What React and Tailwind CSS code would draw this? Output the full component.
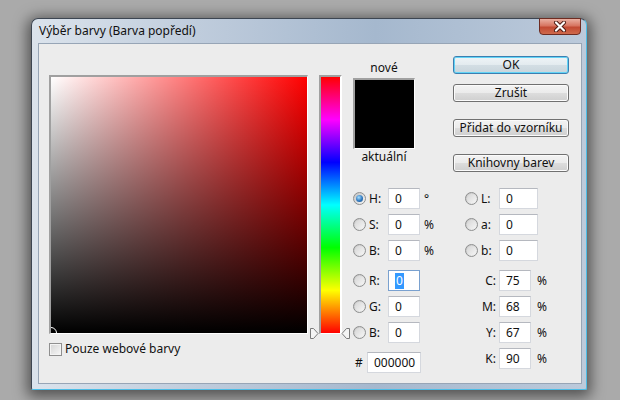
// Photoshop colour picker dialog (Vista Aero frame), Czech UI.

function Radio({ checked }) {
  return (
    <span className="flex h-[13px] w-[13px] shrink-0 items-center justify-center rounded-full border border-[#8e8f8f] bg-[linear-gradient(135deg,#c2c2c2,#f7f7f7)]">
      {checked ? (
        <span className="h-[7px] w-[7px] rounded-full bg-[radial-gradient(circle_at_40%_35%,#a6e0ff,#2f78c0_55%,#1b4f86)]" />
      ) : (
        <span className="h-[9px] w-[9px] rounded-full bg-[linear-gradient(135deg,#d6d6d6,#f5f5f5)]" />
      )}
    </span>
  );
}

function Box({ value, width, focused }) {
  return (
    <div
      className={`flex h-[21px] shrink-0 items-center bg-white pl-[6px] ${width} ${
        focused
          ? 'border border-[#7aa1cf]'
          : 'border border-[#d5d8de] border-t-[#b5b8bf]'
      }`}
    >
      {focused ? (
        <span className="bg-[#3399ff] px-[1px] leading-[16px] text-white">{value}</span>
      ) : (
        value
      )}
    </div>
  );
}

function Button({ children, primary, className = '' }) {
  return (
    <div
      className={`flex h-[18px] items-center justify-center rounded-[3px] border ${
        primary
          ? 'border-[#3c7fb1] bg-[linear-gradient(#eef4f7_0%,#e3ebef_50%,#d3dee4_50%,#c8d5dc_100%)] shadow-[inset_0_0_0_1px_#63d4f6]'
          : 'border-[#707070] bg-[linear-gradient(#f3f3f3_0%,#ebebeb_50%,#dddddd_50%,#cfcfcf_100%)] shadow-[inset_0_0_0_1px_#fbfbfb]'
      } ${className}`}
    >
      {children}
    </div>
  );
}

function Marker({ flip }) {
  return (
    <svg width="9" height="11" viewBox="0 0 9 11" className={flip ? '-scale-x-100' : ''}>
      <polygon points="0.5,0.5 3.5,0.5 8,5.5 3.5,10.5 0.5,10.5" fill="#f4f4f4" stroke="#7a7a7a" />
    </svg>
  );
}

const LEFT_ROWS = [
  { label: 'H:', value: '0', unit: '°', checked: true, mt: '' },
  { label: 'S:', value: '0', unit: '%', mt: 'mt-[5px]' },
  { label: 'B:', value: '0', unit: '%', mt: 'mt-[5px]' },
  { label: 'R:', value: '0', focused: true, mt: 'mt-[9px]' },
  { label: 'G:', value: '0', mt: 'mt-[5px]' },
  { label: 'B:', value: '0', mt: 'mt-[5px]' },
];

const LAB_ROWS = [
  { label: 'L:', value: '0', mt: '' },
  { label: 'a:', value: '0', mt: 'mt-[5px]' },
  { label: 'b:', value: '0', mt: 'mt-[5px]' },
];

const CMYK_ROWS = [
  { label: 'C:', value: '75', mt: 'mt-[9px]' },
  { label: 'M:', value: '68', mt: 'mt-[5px]' },
  { label: 'Y:', value: '67', mt: 'mt-[5px]' },
  { label: 'K:', value: '90', mt: 'mt-[5px]' },
];

export default function App() {
  return (
    <div className="h-[400px] w-[620px] overflow-hidden bg-[#aaaaaa] pl-[31px] pt-[18px] font-['Noto_Sans',sans-serif] text-[12px] text-[#111]">
      <div className="flex h-[372px] w-[556px] flex-col rounded-t-[7px] rounded-b-[2px] border border-[#3d4652] border-b-[#4cbde6] border-r-[#4cbde6] bg-[linear-gradient(90deg,#dbe3ec_0%,#bfccdc_30%,#a5b8ce_62%,#bccadb_100%)] shadow-[0_3px_14px_4px_rgba(0,0,0,0.5)]">
        {/* Title bar */}
        <div className="flex h-[24px] shrink-0 items-center justify-between pl-[7px]">
          <span className="leading-[16px]">Výběr barvy (Barva popředí)</span>
          <div className="-mt-[1px] mr-[5px] flex h-[17px] w-[42px] items-center justify-center self-start rounded-b-[4px] border border-[#6e2c22] bg-[linear-gradient(#eab0a2_0%,#d77561_45%,#c24a33_55%,#cf6a4c_100%)]">
            <svg width="14" height="11" viewBox="0 0 14 11">
              <path d="M3 1.5 L11 9.5 M11 1.5 L3 9.5" stroke="#4a1a12" strokeWidth="4" strokeLinecap="round" />
              <path d="M3 1.5 L11 9.5 M11 1.5 L3 9.5" stroke="#ffffff" strokeWidth="2.2" strokeLinecap="round" />
            </svg>
          </div>
        </div>

        {/* Client area */}
        <div className="ml-[6px] flex h-[341px] w-[544px] border border-[#97a5b6] bg-[#ececec] pl-[10px] pt-[12px]">
          {/* Colour field + hue slider */}
          <div className="mt-[19px] flex flex-col">
            <div className="flex">
              <div className="h-[259px] w-[259px] border-b border-l-2 border-r border-t-2 border-b-white border-l-[#a0a0a0] border-r-white border-t-[#a0a0a0]">
                <div className="relative h-full w-full overflow-hidden bg-[linear-gradient(to_top,#000,rgba(0,0,0,0)),linear-gradient(to_right,#fff,#f00)]">
                  <div className="absolute -bottom-[6px] -left-[6px] h-[12px] w-[12px] rounded-full border border-white" />
                </div>
              </div>
              <div className="relative ml-[11px] h-[259px] w-[23px] border-b border-l-2 border-r-2 border-t-2 border-b-white border-l-[#a0a0a0] border-r-white border-t-[#a0a0a0]">
                <div className="h-full w-full bg-[linear-gradient(to_bottom,#f00_0%,#f0f_16.67%,#00f_33.33%,#0ff_50%,#0f0_66.67%,#ff0_83.33%,#f00_100%)]" />
                <div className="absolute -bottom-[6px] -left-[11px]">
                  <Marker />
                </div>
                <div className="absolute -bottom-[6px] -right-[10px]">
                  <Marker flip />
                </div>
              </div>
            </div>
            <div className="mt-[7px] flex h-[16px] items-center">
              <span className="h-[13px] w-[13px] border border-[#8f8f8f] bg-[linear-gradient(135deg,#d4d4d4,#f8f8f8)] shadow-[inset_0_0_0_1px_#f4f4f4]" />
              <span className="ml-[3px] leading-[16px]">Pouze webové barvy</span>
            </div>
          </div>

          {/* Right side */}
          <div className="ml-[11px] flex flex-col">
            <div className="flex">
              <div className="flex w-[62px] flex-col items-center">
                <span className="mt-[4px] leading-[16px]">nové</span>
                <div className="mt-[2px] h-[71px] w-[62px] border-b border-l-2 border-r border-t-2 border-b-white border-l-[#a0a0a0] border-r-white border-t-[#a0a0a0] bg-black" />
                <span className="leading-[16px]">aktuální</span>
              </div>
              <div className="ml-[38px] flex w-[116px] flex-col">
                <Button primary>OK</Button>
                <Button className="mt-[10px]">Zrušit</Button>
                <Button className="mt-[17px]">Přidat do vzorníku</Button>
                <Button className="mt-[17px]">Knihovny barev</Button>
              </div>
            </div>

            <div className="mt-[16px] flex">
              <div className="flex w-[112px] flex-col">
                {LEFT_ROWS.map((r, i) => (
                  <div key={i} className={`flex h-[21px] items-center ${r.mt}`}>
                    <Radio checked={r.checked} />
                    <span className="ml-[3px] w-[19px]">{r.label}</span>
                    <Box value={r.value} width="w-[32px]" focused={r.focused} />
                    {r.unit && <span className="ml-[4px]">{r.unit}</span>}
                  </div>
                ))}
                <div className="mt-[9px] flex h-[21px] items-center pl-[2px]">
                  <span className="w-[12px]">#</span>
                  <Box value="000000" width="w-[54px]" />
                </div>
              </div>

              <div className="flex flex-col">
                {LAB_ROWS.map((r, i) => (
                  <div key={i} className={`flex h-[21px] items-center ${r.mt}`}>
                    <Radio />
                    <span className="ml-[3px] w-[18px]">{r.label}</span>
                    <Box value={r.value} width="w-[39px]" />
                  </div>
                ))}
                {CMYK_ROWS.map((r, i) => (
                  <div key={i} className={`flex h-[21px] items-center ${r.mt}`}>
                    <span className="w-[34px] pr-[3px] text-right">{r.label}</span>
                    <Box value={r.value} width="w-[32px]" />
                    <span className="ml-[6px]">%</span>
                  </div>
                ))}
              </div>
            </div>
          </div>
        </div>
      </div>
    </div>
  );
}
